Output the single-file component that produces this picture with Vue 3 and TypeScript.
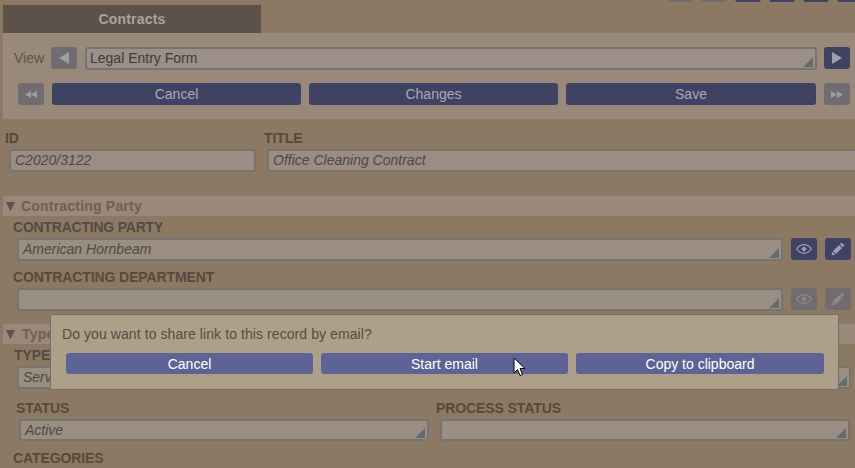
<script setup lang="ts">
const topButtons: string[] = ['off', 'off', 'on', 'on', 'on', 'on']
</script>

<template>
  <div class="page">
    <div class="top-tools">
      <span v-for="(state, i) in topButtons" :key="i" class="square" :class="state"></span>
    </div>
    <div class="tab">Contracts</div>

    <section class="panel">
      <div class="view-row">
        <span class="view-label">View</span>
        <button class="square off nav" type="button">
          <svg width="12" height="14" viewBox="0 0 12 14"><path d="M11 1v12L1 7z" /></svg>
        </button>
        <div class="field view-select">Legal Entry Form<i class="corner"></i></div>
        <button class="square on" type="button">
          <svg width="12" height="14" viewBox="0 0 12 14"><path d="M1 1v12l10-6z" /></svg>
        </button>
      </div>
      <div class="action-row">
        <button class="square off nav" type="button">
          <svg width="14" height="9" viewBox="0 0 14 9"><path d="M7 1v7L1 4.500zM13 1v7L7 4.500z" /></svg>
        </button>
        <button class="wide" type="button">Cancel</button>
        <button class="wide" type="button">Changes</button>
        <button class="wide" type="button">Save</button>
        <button class="square off nav" type="button">
          <svg width="14" height="9" viewBox="0 0 14 9"><path d="M1 1v7l6-3.500zM7 1v7l6-3.500z" /></svg>
        </button>
      </div>
    </section>

    <div class="id-row">
      <div class="id-col">
        <label class="cap">ID</label>
        <div class="field id-field">C2020/3122</div>
      </div>
      <div class="title-col">
        <label class="cap">TITLE</label>
        <div class="field title-field">Office Cleaning Contract</div>
      </div>
    </div>

    <div class="section first-section">
      <svg class="tri" width="9" height="9" viewBox="0 0 9 9"><path d="M0 0h9L4.500 9z" /></svg>
      <span>Contracting Party</span>
    </div>
    <label class="cap party-label">CONTRACTING PARTY</label>
    <div class="lookup">
      <div class="field grow">American Hornbeam<i class="corner"></i></div>
      <button class="square on" type="button">
        <svg width="16" height="10" viewBox="0 0 16 10"><path class="eye" d="M.7 5C2.500 2.300 5 .7 8 .7s5.500 1.600 7.300 4.300C13.500 7.700 11 9.300 8 9.300S2.500 7.700.7 5z" /><path d="M8 2.300L10.700 5 8 7.700 5.300 5z" /></svg>
      </button>
      <button class="square on" type="button">
        <svg width="14" height="14" viewBox="0 0 14 14"><path d="M10.500.5l3 3-1.700 1.700-3-3zM8.100 2.900l3 3L5 12l-3-3zM1.500 9.700l2.800 2.800-3.800 1z" /></svg>
      </button>
    </div>
    <label class="cap dept-label">CONTRACTING DEPARTMENT</label>
    <div class="lookup">
      <div class="field grow"><i class="corner"></i></div>
      <button class="square off" type="button">
        <svg width="16" height="10" viewBox="0 0 16 10"><path class="eye" d="M.7 5C2.500 2.300 5 .7 8 .7s5.500 1.600 7.300 4.300C13.500 7.700 11 9.300 8 9.300S2.500 7.700.7 5z" /><path d="M8 2.300L10.700 5 8 7.700 5.300 5z" /></svg>
      </button>
      <button class="square off" type="button">
        <svg width="14" height="14" viewBox="0 0 14 14"><path d="M10.500.5l3 3-1.700 1.700-3-3zM8.100 2.900l3 3L5 12l-3-3zM1.500 9.700l2.800 2.800-3.800 1z" /></svg>
      </button>
    </div>

    <div class="section second-section">
      <svg class="tri" width="9" height="9" viewBox="0 0 9 9"><path d="M0 0h9L4.500 9z" /></svg>
      <span class="type-title">Type</span>
    </div>
    <label class="cap type-label">TYPE</label>
    <div class="field type-field">Service<i class="corner"></i></div>

    <div class="status-row">
      <div class="status-col">
        <label class="cap">STATUS</label>
        <div class="field status-field">Active<i class="corner"></i></div>
      </div>
      <div class="process-col">
        <label class="cap">PROCESS STATUS</label>
        <div class="field process-field"><i class="corner"></i></div>
      </div>
    </div>
    <label class="cap categories">CATEGORIES</label>

    <div class="dialog">
      <p class="question">Do you want to share link to this record by email?</p>
      <div class="dialog-actions">
        <button type="button">Cancel</button>
        <button type="button">Start email</button>
        <button class="copy" type="button">Copy to clipboard</button>
      </div>
    </div>

    <svg class="cursor" width="14" height="20" viewBox="0 0 14 20">
      <path d="M1 1v15l3.500-3.500 2.500 6 2.500-1-2.500-6h5z" />
    </svg>
  </div>
</template>

<style>
html, body { margin: 0; background: #8b7963; }
</style>

<style scoped>
.page {
  position: relative;
  width: 855px;
  height: 468px;
  overflow: hidden;
  background: #8b7963;
  font-family: "Liberation Sans", Arial, sans-serif;
  font-size: 14px;
  color: #4f4a42;
}
button { font-family: inherit; font-size: 14px; padding: 0; margin: 0; border: 0; }
.top-tools {
  display: flex;
  gap: 8px;
  height: 2px;
  margin-left: 667px;
  align-items: flex-end;
  overflow: hidden;
}
.top-tools .square { flex: none; }
.square {
  flex: none;
  display: flex;
  align-items: center;
  justify-content: center;
  width: 26px;
  height: 22px;
  box-sizing: border-box;
  border-radius: 3px;
}
.square svg { fill: #9f9fa8; }
.square .eye { fill: none; stroke: #9f9fa8; stroke-width: 1.200; }
.square.on { background: #404264; }
.square.off { background: #716c70; }
.square.off svg { fill: #8b8989; }
.square.off .eye { fill: none; stroke: #8b8989; }
.square.off.nav svg { fill: #a09d9e; }
.tab {
  width: 258px;
  height: 28px;
  margin: 3px 0 0 3px;
  background: #5c5249;
  color: #a8a49c;
  font-weight: bold;
  font-size: 14px;
  letter-spacing: 0.2px;
  line-height: 28px;
  text-align: center;
}
.panel {
  height: 86px;
  margin-left: 3px;
  background: #98897a;
  box-sizing: border-box;
  padding-top: 14px;
}
.view-row { display: flex; align-items: center; padding-left: 11px; height: 22px; }
.view-label { width: 37px; color: #5d5448; }
.field {
  position: relative;
  height: 23px;
  box-sizing: border-box;
  border: 2px solid #76746f;
  border-radius: 3px;
  background: #998e81;
  padding-left: 4px;
  line-height: 19px;
  font-style: italic;
  color: #4f4a42;
  white-space: nowrap;
  overflow: hidden;
}
.view-select {
  width: 732px;
  height: 23px;
  margin: 0 7px 0 8px;
  padding-left: 3px;
  background: #9b8f87;
  font-style: normal;
  color: #3f3b36;
}
.action-row { display: flex; align-items: center; gap: 8px; margin-top: 14px; padding-left: 15px; }
.wide {
  width: 249px;
  height: 22px;
  border-radius: 3px;
  background: #404264;
  color: #a9a9b0;
}
.wide:nth-child(4) { width: 250px; }
.corner {
  position: absolute;
  right: 2px;
  bottom: 1px;
  width: 0;
  height: 0;
  border-style: solid;
  border-width: 0 0 10px 10px;
  border-color: transparent transparent #606c6e transparent;
}
.cap {
  display: block;
  font-weight: bold;
  font-size: 14px;
  letter-spacing: -0.1px;
  line-height: 16px;
  color: #564a3d;
}
.id-row { display: flex; margin-top: 11px; }
.id-col { width: 259px; padding-left: 5px; box-sizing: border-box; flex: none; }
.id-field { width: 247px; margin: 3px 0 0 4px; }
.title-col { flex: 1; padding-left: 5px; }
.title-field { width: 600px; margin: 3px 0 0 3px; }
.section {
  display: flex;
  align-items: center;
  height: 20px;
  margin-left: 3px;
  background: #98897a;
  font-weight: bold;
  letter-spacing: 0.2px;
  color: #6f6150;
}
.tri { fill: #5c5249; margin-left: 3px; margin-right: 6px; margin-top: 1px; }
.type-title { margin-left: 1px; }
.first-section { margin-top: 24px; }
.party-label { margin: 3px 0 3px 13px; letter-spacing: -0.22px; }
.dept-label { margin: 8px 0 3px 13px; }
.lookup { display: flex; gap: 8px; margin-left: 17px; margin-right: 4px; align-items: flex-start; }
.grow { flex: 1; }
.second-section { margin-top: 13px; }
.type-label { margin: 3px 0 3px 14px; }
.type-field { width: 834px; margin-left: 17px; }
.status-row { display: flex; margin-top: 11px; }
.status-col { width: 432px; padding-left: 16px; box-sizing: border-box; }
.status-field { width: 410px; margin: 3px 0 0 3px; height: 22px; }
.process-col { padding-left: 4px; }
.process-field { width: 410px; margin: 3px 0 0 4px; height: 22px; }
.categories { margin: 9px 0 0 13px; }
.dialog {
  position: absolute;
  left: 50px;
  top: 314px;
  width: 789px;
  height: 76px;
  box-sizing: border-box;
  border: 1px solid #6e7170;
  background: #ae9f88;
}
.question { margin: 11px 0 0 11px; line-height: 16px; color: #564c43; letter-spacing: 0.08px; }
.dialog-actions { display: flex; gap: 8px; margin: 11px 0 0 15px; }
.dialog-actions button {
  width: 247px;
  height: 21px;
  border-radius: 3px;
  background: #5d6395;
  color: #fff;
}
.dialog-actions .copy { width: 248px; }
.cursor {
  position: absolute;
  left: 513px;
  top: 357px;
  fill: #fff;
  stroke: #000;
  stroke-width: 1;
}
</style>
